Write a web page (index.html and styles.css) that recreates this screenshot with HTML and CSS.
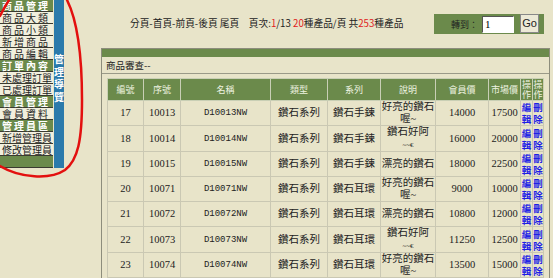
FILE: index.html
```html
<!DOCTYPE html>
<html lang="zh-Hant">
<head>
  <meta charset="UTF-8" />
  <title>商品審查</title>
  <link rel="stylesheet" href="styles.css">
</head>
<body>

<div class="page">
  <aside class="sidebar">
    <ul class="menu">
      <li class="menu-head">商品管理</li>
      <li>商品大類</li>
      <li>商品小類</li>
      <li>新增商品</li>
      <li>商品編輯</li>
      <li class="menu-head">訂單內容</li>
      <li class="long">未處理訂單</li>
      <li class="long">已處理訂單</li>
      <li class="menu-head">會員管理</li>
      <li>會員資料</li>
      <li class="menu-head">管理員區</li>
      <li class="long">新增管理員</li>
      <li class="long">修改管理員</li>
      <li class="menu-foot"></li>
    </ul>
    <div class="menu-tab"><span>管理導覽</span></div>
  </aside>

  <main class="content">
    <div class="toolbar">
      <p class="pager">分頁-首頁-前頁-後頁 尾頁　頁次:<span class="hot">1</span>/13 <span class="hot">20</span>種產品/頁 共<span class="hot">253</span>種產品</p>
      <form class="goto">
        <label>轉到：</label>
        <input type="text" value="1" />
        <button type="button">Go</button>
      </form>
    </div>

    <section class="panel">
      <div class="panel-bar"></div>
      <div class="panel-title">商品審查--</div>
      <table class="grid">
        <colgroup>
          <col style="width:36px"><col style="width:37px"><col style="width:90px"><col style="width:57px">
          <col style="width:53px"><col style="width:55px"><col style="width:53px"><col style="width:32px">
          <col style="width:12px"><col style="width:11px">
        </colgroup>
        <thead>
          <tr>
            <th>編號</th><th>序號</th><th>名稱</th><th>類型</th><th>系列</th>
            <th>說明</th><th>會員價</th><th>市場價</th><th>操作</th><th>操作</th>
          </tr>
        </thead>
        <tbody id="rows"></tbody>
      </table>
    </section>
  </main>

  <svg class="scribble" width="100" height="190" viewBox="0 0 100 190">
    <path d="M67 0 C76 18, 82 50, 82 100 C82 140, 78 160, 65 170 C50 180, 20 178, 0 166" />
    <path d="M0 16 Q4 8 9 0" />
  </svg>
</div>

<script>
  const products = [
    { id: 17, no: 10013, code: 'D10013NW', type: '鑽石系列', series: '鑽石手鍊', note: '好亮的鑽石<br>喔~', member: 14000, market: 17500 },
    { id: 18, no: 10014, code: 'D10014NW', type: '鑽石系列', series: '鑽石手鍊', note: '鑽石好阿<br><small>~~€</small>', member: 16000, market: 20000 },
    { id: 19, no: 10015, code: 'D10015NW', type: '鑽石系列', series: '鑽石手鍊', note: '漂亮的鑽石', member: 18000, market: 22500 },
    { id: 20, no: 10071, code: 'D10071NW', type: '鑽石系列', series: '鑽石耳環', note: '好亮的鑽石<br>喔~', member: 9000, market: 10000 },
    { id: 21, no: 10072, code: 'D10072NW', type: '鑽石系列', series: '鑽石耳環', note: '漂亮的鑽石', member: 10800, market: 12000 },
    { id: 22, no: 10073, code: 'D10073NW', type: '鑽石系列', series: '鑽石耳環', note: '鑽石好阿<br><small>~~€</small>', member: 11250, market: 12500 },
    { id: 23, no: 10074, code: 'D10074NW', type: '鑽石系列', series: '鑽石耳環', note: '好亮的鑽石<br>喔~', member: 13500, market: 15000 },
    { id: 24, no: 10075, code: 'D10075NW', type: '鑽石系列', series: '鑽石耳環', note: '漂亮的鑽石', member: 15300, market: 17000 }
  ];

  const rows = document.getElementById('rows');

  products.forEach(p => {
    const tr = document.createElement('tr');
    tr.innerHTML = `
      <td class="num">${p.id}</td>
      <td class="num">${p.no}</td>
      <td class="code">${p.code}</td>
      <td>${p.type}</td>
      <td>${p.series}</td>
      <td class="note">${p.note}</td>
      <td class="num">${p.member}</td>
      <td class="num">${p.market}</td>
      <td class="op"><a href="#">編輯</a></td>
      <td class="op"><a href="#">刪除</a></td>
    `;
    rows.appendChild(tr);
  });
</script>

</body>
</html>
```

FILE: styles.css
```css
body {
  margin: 0;
  background-color: #e8e4c9;
  color: #222;
  font-family: "Liberation Serif", "Noto Sans CJK TC", serif;
  font-size: 10.5px;
}

.page {
  position: relative;
  display: flex;
  align-items: flex-start;
}

/* left navigation */
.sidebar {
  display: flex;
  gap: 1px;
  width: 64px;
  flex-shrink: 0;
}

.menu {
  list-style: none;
  margin: 0;
  padding: 0;
  width: 53px;
  font-family: "Noto Sans CJK TC", sans-serif;
  font-size: 10px;
}

.menu li {
  height: 11px;
  line-height: 11px;
  padding-left: 2px;
  letter-spacing: 2px;
  background-color: #f1efdd;
  border-bottom: 1px solid #3a3a30;
  white-space: nowrap;
}

.menu li.long {
  letter-spacing: 0;
}

.menu .menu-head {
  background-color: #6b8a4b;
  color: #fff;
  font-weight: bold;
}

.menu .menu-foot {
  background-color: #6b8a4b;
}

.menu-tab {
  width: 10px;
  height: 168px;
  padding-top: 53px;
  box-sizing: border-box;
  background-color: #2b7aab;
  color: #fff;
  font-family: "Noto Sans CJK TC", sans-serif;
  font-size: 10px;
  font-weight: bold;
  line-height: 12.5px;
  text-align: center;
}

.menu-tab span {
  display: block;
  width: 10px;
}

/* main area */
.content {
  flex: 1;
  padding: 0 4px 0 37px;
}

.toolbar {
  display: flex;
  align-items: center;
  justify-content: space-between;
  height: 46px;
  padding: 0 6px 0 29px;
}

.pager {
  margin: 0;
  font-family: "Noto Sans CJK TC", sans-serif;
  font-size: 9.7px;
  color: #222;
}

.hot {
  color: #e02020;
}

.goto {
  display: flex;
  align-items: flex-end;
  height: 20px;
  margin: 1px 0 0;
  padding: 0 5px 0 17px;
  background-color: #6b8a4b;
}

.goto label {
  font-family: "Noto Sans CJK TC", sans-serif;
  font-size: 9px;
  color: #222;
  margin: 0 4px 3px 0;
}

.goto input {
  width: 32px;
  height: 17px;
  box-sizing: border-box;
  margin: 0 6px 1px 0;
  padding: 0 2px;
  border: 1px solid #fff;
  border-top-color: #555;
  border-left-color: #555;
  font-family: "Liberation Serif", serif;
  font-size: 11px;
}

.goto button {
  align-self: flex-start;
  width: 19px;
  height: 19px;
  padding: 0;
  margin: 0;
  border: 1px solid #888;
  background-color: #ece9d6;
  font-family: "Liberation Sans", sans-serif;
  font-size: 11px;
  color: #222;
}

.panel {
  margin-top: 2px;
  border: 1px solid #8d8d7c;
  border-bottom: none;
  height: 240px;
}

.panel-bar {
  height: 8px;
  background-color: #6b8a4b;
}

.panel-title {
  height: 16px;
  line-height: 16px;
  padding-left: 4px;
  border-bottom: 1px solid #9a9a88;
  font-family: "Noto Sans CJK TC", sans-serif;
  font-size: 9.5px;
}

.grid {
  table-layout: fixed;
  width: 436px;
  margin: 4px 5px 0;
  border-collapse: collapse;
  border: 1px solid #8d8d7c;
}

.grid th {
  height: 21px;
  padding: 0;
  background-color: #6b8a4b;
  color: #eef3e0;
  font-family: "Noto Sans CJK TC", sans-serif;
  font-size: 9px;
  font-weight: normal;
  line-height: 10px;
  border: 1px solid #c9cfb5;
}

.grid td {
  height: 24px;
  padding: 0;
  text-align: center;
  line-height: 12px;
  border: 1px solid #cac8b3;
  font-family: "Liberation Serif", "Noto Sans CJK TC", serif;
  font-size: 10.5px;
}

.grid td.code {
  font-family: "Liberation Mono", monospace;
  font-size: 9px;
}

.grid td.note small {
  font-size: 7px;
}

.grid td.op {
  font-family: "Noto Sans CJK TC", sans-serif;
  font-size: 9.5px;
  font-weight: bold;
  line-height: 12px;
}

.grid td.op a {
  color: #1e1ee6;
  text-decoration: none;
}

/* red marker circle drawn over the nav */
.scribble {
  position: absolute;
  left: 0;
  top: 0;
  fill: none;
  stroke: #e3100f;
  stroke-width: 2.5;
  stroke-linecap: round;
}
```
